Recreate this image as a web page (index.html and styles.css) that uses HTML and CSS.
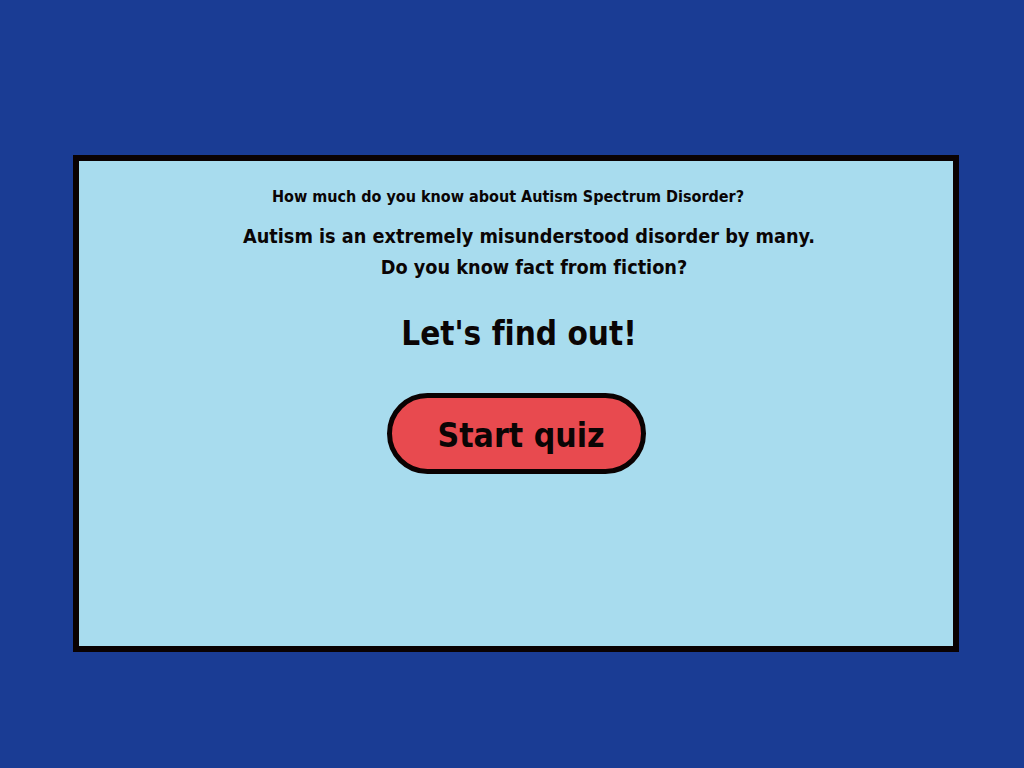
FILE: index.html
```html
<!DOCTYPE html>
<html>
<head>
<meta charset="utf-8">
<link rel="stylesheet" href="styles.css">
</head>
<body>
<main class="card">
  <h2 class="question">How much do you know about Autism Spectrum Disorder?</h2>
  <p class="intro">Autism is an extremely misunderstood disorder by many.<br><span class="sub">Do you know fact from fiction?</span></p>
  <h1 class="cta">Let's find out!</h1>
  <button class="start">Start quiz</button>
</main>
</body>
</html>
```

FILE: styles.css
```css
html, body {
  margin: 0;
  padding: 0;
}
body {
  width: 1024px;
  height: 768px;
  background: #1a3c94;
  font-family: "DejaVu Sans Condensed", "DejaVu Sans", sans-serif;
  font-weight: bold;
  font-variant-ligatures: none;
  color: #0a0505;
  padding-top: 155px;
  padding-left: 73px;
  box-sizing: border-box;
}
.card {
  width: 886px;
  height: 497px;
  box-sizing: border-box;
  border: 6px solid #0a0202;
  background: #a8dcee;
  display: flex;
  flex-direction: column;
  align-items: center;
}
.question {
  margin: 26px 0 0 0;
  padding-right: 16px;
  font-size: 16px;
  line-height: 20px;
}
.intro {
  margin: 14px 0 0 0;
  padding-left: 26px;
  font-size: 19.7px;
  line-height: 31px;
  text-align: center;
}
.sub {
  padding-left: 10px;
}
.cta {
  margin: 31px 0 0 0;
  padding-left: 6px;
  font-size: 33px;
  line-height: 40px;
  font-variant-ligatures: none;
}
.start {
  margin: 39px 0 0 0;
  width: 259px;
  height: 81px;
  box-sizing: border-box;
  border: 5px solid #0a0202;
  border-radius: 41px;
  background: #e84a4f;
  font-family: inherit;
  font-weight: bold;
  font-size: 33.5px;
  color: #0a0505;
  padding: 4px 0 0 10px;
}
```
